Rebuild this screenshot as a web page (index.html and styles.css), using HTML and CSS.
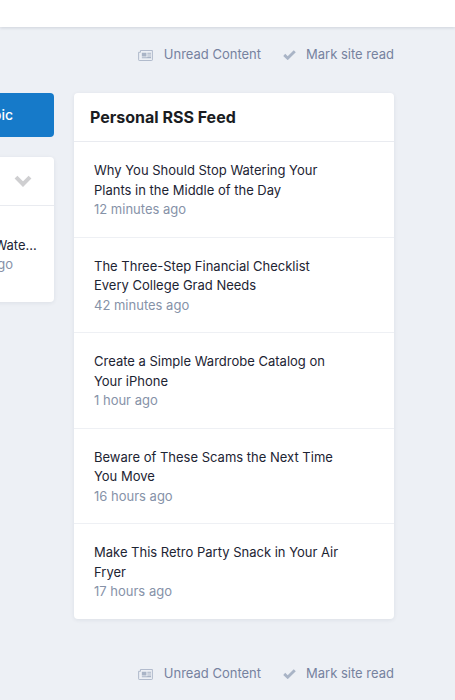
FILE: index.html
```html
<!DOCTYPE html>
<html lang="en">
<head>
<meta charset="utf-8">
<title>Personal RSS Feed</title>
<link rel="stylesheet" href="styles.css">
</head>
<body>
<header class="site-header"></header>
<nav class="toolbar toolbar-top">
  <a class="tool"><svg class="tool-icon news" viewBox="0 0 16 12"><path d="M2.5.5h13v10.2a.8.8 0 0 1-.8.8H1.3a.8.8 0 0 1-.8-.8V2.5h2z" fill="none" stroke="currentColor"/><path d="M4 3h5v4H4zM10 3h4v1h-4zM10 5h4v1h-4zM4 8h10v1H4zM10 7h4v1h-4z" fill="currentColor"/></svg>Unread Content</a>
  <a class="tool"><svg class="tool-icon check" viewBox="0 0 14 11"><path d="M1.2 5.4 5 9l7.8-7.6" fill="none" stroke="currentColor" stroke-width="3.2"/></svg>Mark site read</a>
</nav>
<main class="columns">
  <section class="side">
    <a class="start-btn">Start New Topic</a>
    <div class="card side-card">
      <div class="side-head"><svg class="chevron" viewBox="0 0 18 12"><path d="M2 2.2l7 7 7-7" fill="none" stroke="currentColor" stroke-width="4"/></svg></div>
      <div class="side-item">
        <div class="side-title">Why You Should Stop Wate...</div>
        <div class="time side-time">12 minutes ago</div>
      </div>
    </div>
  </section>
  <section class="card feed">
    <h2 class="feed-title">Personal RSS Feed</h2>
    <ul class="feed-list">
      <li class="feed-item"><a class="feed-link">Why You Should Stop Watering Your Plants in the Middle of the Day</a><div class="time">12 minutes ago</div></li>
      <li class="feed-item"><a class="feed-link">The Three-Step Financial Checklist Every College Grad Needs</a><div class="time">42 minutes ago</div></li>
      <li class="feed-item"><a class="feed-link">Create a Simple Wardrobe Catalog on Your iPhone</a><div class="time">1 hour ago</div></li>
      <li class="feed-item"><a class="feed-link">Beware of These Scams the Next Time You Move</a><div class="time">16 hours ago</div></li>
      <li class="feed-item"><a class="feed-link">Make This Retro Party Snack in Your Air Fryer</a><div class="time">17 hours ago</div></li>
    </ul>
  </section>
</main>
<nav class="toolbar toolbar-bottom">
  <a class="tool"><svg class="tool-icon news" viewBox="0 0 16 12"><path d="M2.5.5h13v10.2a.8.8 0 0 1-.8.8H1.3a.8.8 0 0 1-.8-.8V2.5h2z" fill="none" stroke="currentColor"/><path d="M4 3h5v4H4zM10 3h4v1h-4zM10 5h4v1h-4zM4 8h10v1H4zM10 7h4v1h-4z" fill="currentColor"/></svg>Unread Content</a>
  <a class="tool"><svg class="tool-icon check" viewBox="0 0 14 11"><path d="M1.2 5.4 5 9l7.8-7.6" fill="none" stroke="currentColor" stroke-width="3.2"/></svg>Mark site read</a>
</nav>
</body>
</html>
```
FILE: styles.css
```css
* { box-sizing: border-box; }
html, body { margin: 0; height: 700px; overflow: hidden; }
body {
  background: #edf0f5;
  font-family: Inter, "Liberation Sans", sans-serif;
  font-size: 13px;
  line-height: 19.5px;
  color: #1d2433;
}
.site-header {
  height: 27px;
  background: #fff;
  box-shadow: 0 1px 3px rgba(30, 40, 70, 0.14);
}
.toolbar {
  display: flex;
  justify-content: flex-end;
  gap: 22px;
  padding-right: 61px;
  height: 20px;
  align-items: center;
  color: #76829f;
}
.toolbar-top { margin: 18px 0 28px; }
.toolbar-bottom { margin-top: 45px; }
.tool { display: flex; align-items: center; }
.tool-icon { display: block; color: #a9b4c6; }
.news { width: 15px; height: 11px; margin-right: 11px; }
.check { width: 13px; height: 10px; margin-right: 10px; }
.columns {
  display: flex;
  justify-content: flex-end;
  gap: 20px;
  padding-right: 61px;
  align-items: flex-start;
}
.side { flex: 0 0 222px; display: flex; flex-direction: column; gap: 20px; }
.start-btn {
  display: flex;
  align-items: center;
  justify-content: flex-end;
  height: 44px;
  padding-right: 41px;
  border-radius: 4px;
  background: #167ac9;
  color: #fff;
  font-size: 14px;
  font-weight: 500;
  white-space: nowrap;
}
.card {
  background: #fff;
  border-radius: 4px;
  box-shadow: 0 1px 4px rgba(30, 40, 70, 0.08);
}
.side-head {
  height: 49px;
  border-bottom: 1px solid #e9ebf0;
  display: flex;
  justify-content: flex-end;
  align-items: center;
  padding-right: 22px;
}
.chevron { width: 18px; height: 12px; color: #cfcfd1; }
.side-item { height: 96px; padding: 29.5px 17px 0 26px; }
.side-title { white-space: nowrap; overflow: hidden; }
.side-time { width: 155px; text-align: right; white-space: nowrap; }
.feed { flex: 0 0 320px; }
.feed-title {
  margin: 0;
  height: 49px;
  padding: 14px 16px 0;
  font-size: 16px;
  line-height: 20px;
  font-weight: 700;
  color: #1a1c22;
  border-bottom: 1px solid #e9ebf0;
}
.feed-list { margin: 0; padding: 0; list-style: none; }
.feed-item {
  height: 95.5px;
  padding: 19px 50px 0 20px;
  border-bottom: 1px solid #eef0f4;
}
.feed-item:last-child { height: 95px; border-bottom: 0; }
.feed-link { display: block; }
.time { color: #8692a8; }
```
